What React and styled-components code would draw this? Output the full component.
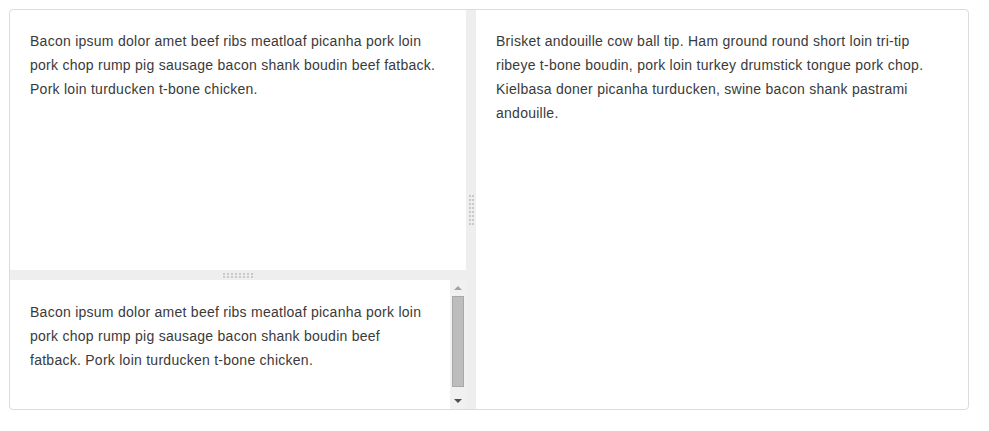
import React from "react";
import styled, { createGlobalStyle } from "styled-components";

const leftTop =
  "Bacon ipsum dolor amet beef ribs meatloaf picanha pork loin pork chop rump pig sausage bacon shank boudin beef fatback. Pork loin turducken t-bone chicken.";
const right =
  "Brisket andouille cow ball tip. Ham ground round short loin tri-tip ribeye t-bone boudin, pork loin turkey drumstick tongue pork chop. Kielbasa doner picanha turducken, swine bacon shank pastrami andouille.";

const Grip = ({ vertical }) => (
  <GripDots $vertical={vertical}>
    {Array.from({ length: 16 }).map((_, i) => (
      <Dot key={i} />
    ))}
  </GripDots>
);

const App = () => {
  return (
    <>
      <GlobalStyle />
      <Frame>
        <LeftColumn>
          <Pane $height="260px">
            <Text>{leftTop}</Text>
          </Pane>
          <Gutter $horizontal>
            <Grip />
          </Gutter>
          <ScrollPane>
            <Text>{leftTop}</Text>
            <Scrollbar>
              <ArrowButton>
                <Arrow $up />
              </ArrowButton>
              <Track>
                <Thumb />
              </Track>
              <ArrowButton>
                <Arrow />
              </ArrowButton>
            </Scrollbar>
          </ScrollPane>
        </LeftColumn>
        <Gutter>
          <Grip vertical />
        </Gutter>
        <Pane>
          <Text>{right}</Text>
        </Pane>
      </Frame>
    </>
  );
};

const GlobalStyle = createGlobalStyle`
  body {
    margin: 0;
    background: #fff;
    font-family: "Liberation Sans", Arial, sans-serif;
  }
`;

const Frame = styled.div`
  margin: 9px;
  width: 960px;
  height: 401px;
  box-sizing: border-box;
  border: 1px solid #dcdcdc;
  border-radius: 4px;
  display: grid;
  grid-template-columns: 456px 10px 1fr;
  overflow: hidden;
`;

const LeftColumn = styled.div`
  display: flex;
  flex-direction: column;
  min-height: 0;
`;

const Pane = styled.div`
  height: ${(p) => p.$height || "auto"};
  flex-shrink: 0;
  padding: 19px 20px 20px;
  box-sizing: border-box;
`;

const ScrollPane = styled.div`
  flex: 1;
  display: flex;
  min-height: 0;
  overflow: hidden;

  & > p {
    flex: 1;
    padding: 20px;
  }
`;

const Text = styled.p`
  margin: 0;
  font-size: 14px;
  line-height: 24px;
  letter-spacing: 0.26px;
  color: #3a3a3a;
`;

const Gutter = styled.div`
  background: #eee;
  display: flex;
  align-items: center;
  justify-content: center;
  flex-shrink: 0;
  height: ${(p) => (p.$horizontal ? "10px" : "auto")};
`;

const GripDots = styled.div`
  display: grid;
  grid-template-columns: ${(p) => (p.$vertical ? "repeat(2, 2px)" : "repeat(8, 2px)")};
  grid-auto-rows: 2px;
  column-gap: ${(p) => (p.$vertical ? "1px" : "2px")};
  row-gap: ${(p) => (p.$vertical ? "2px" : "1px")};
`;

const Dot = styled.span`
  background: #c9c9c9;
`;

const Scrollbar = styled.div`
  width: 16px;
  flex-shrink: 0;
  background: #f1f1f1;
  display: flex;
  flex-direction: column;
`;

const ArrowButton = styled.div`
  height: 16px;
  display: flex;
  align-items: center;
  justify-content: center;
  flex-shrink: 0;
`;

const Arrow = styled.span`
  width: 0;
  height: 0;
  border-left: 4px solid transparent;
  border-right: 4px solid transparent;
  ${(p) =>
    p.$up
      ? "border-bottom: 4px solid #a3a3a3;"
      : "border-top: 4px solid #505050;"}
`;

const Track = styled.div`
  flex: 1;
  padding: 0 2px 6px;
  display: flex;
`;

const Thumb = styled.div`
  flex: 1;
  background: #bdbdbd;
  border: 1px solid #a8a8a8;
`;

export default App;
